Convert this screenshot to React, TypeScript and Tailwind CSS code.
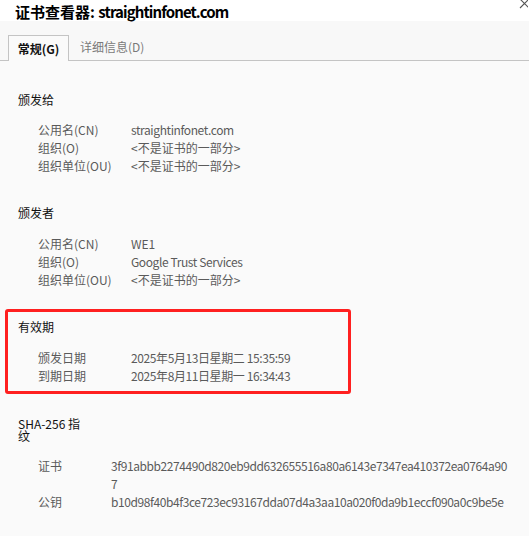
const font = "font-['Noto_Sans_CJK_SC','Noto_Sans',sans-serif]"

const Row = ({ label, value, labelW = 'w-[93px]' }: { label: string, value: React.ReactNode, labelW?: string }) => (
  <div className="flex pl-[38px] h-[18px] leading-[18px]">
    <div className={`${labelW} shrink-0`}>{label}</div>
    <div>{value}</div>
  </div>
)

const Header = ({ children }: { children: React.ReactNode }) => (
  <div className="pl-[18px] h-[18px] leading-[18px] text-[#111]">{children}</div>
)

const Latin = ({ children }: { children: React.ReactNode }) => (
  <span className="tracking-[-0.4px]">{children}</span>
)

export default function App() {
  return (
    <div className={`${font} w-[529px] h-[536px] bg-[#fafafa] text-[12px] overflow-hidden`}>
      <div className="relative h-[21px] bg-white">
        <div className="pl-[15px] pt-[2px] text-[15px] leading-[20px] font-bold text-black">
          证书查看器: <span className="tracking-[-0.9px]">straightinfonet.com</span>
        </div>
        <svg className="absolute right-[1px] top-[0px]" width="9" height="9" viewBox="0 0 9 9">
          <path d="M1 -1 L10 8 M10 -1 L1 8" stroke="#555" strokeWidth="1.1" />
        </svg>
      </div>

      <div className="flex items-end h-[40px] border-b border-[#c4c4c4] bg-[#f8f8f8] pl-[8px]">
        <div className="h-[26px] w-[61px] -mb-px border border-b-0 border-[#c4c4c4] bg-[#fafafa] flex items-center justify-center font-bold text-[#111]">
          常规(G)
        </div>
        <div className="h-[26px] px-[11px] flex items-center text-[#7a7a7a]">
          详细信息(D)
        </div>
      </div>

      <div className="text-[#5a5a5a]">
        <div className="pt-[30px]">
          <Header>颁发给</Header>
          <div className="mt-[12px]">
            <Row label="公用名(CN)" value={<Latin>straightinfonet.com</Latin>} />
            <Row label="组织(O)" value="<不是证书的一部分>" />
            <Row label="组织单位(OU)" value="<不是证书的一部分>" />
          </div>
        </div>

        <div className="pt-[29px]">
          <Header>颁发者</Header>
          <div className="mt-[13px]">
            <Row label="公用名(CN)" value="WE1" />
            <Row label="组织(O)" value={<Latin>Google Trust Services</Latin>} />
            <Row label="组织单位(OU)" value="<不是证书的一部分>" />
          </div>
        </div>

        <div className="mt-[20px] ml-[5px] w-[346px] h-[85px] border-[3px] border-[#ff2020] rounded-[3px] relative">
          <div className="absolute left-[10px] top-[6px] w-[330px]">
            <div className="h-[18px] leading-[18px] text-[#111]">有效期</div>
            <div className="mt-[13px]">
              <div className="flex pl-[20px] h-[18px] leading-[18px]">
                <div className="w-[93px] shrink-0">颁发日期</div>
                <div><Latin>2025年5月13日星期二 15:35:59</Latin></div>
              </div>
              <div className="flex pl-[20px] h-[18px] leading-[18px]">
                <div className="w-[93px] shrink-0">到期日期</div>
                <div><Latin>2025年8月11日星期一 16:34:43</Latin></div>
              </div>
            </div>
          </div>
        </div>

        <div className="pt-[24px]">
          <div className="pl-[18px] w-[90px] leading-[12px] text-[#111]">SHA-256 指纹</div>
          <div className="mt-[15px]">
            <div className="flex pl-[38px] leading-[18px]">
              <div className="w-[73px] shrink-0">证书</div>
              <div className="tracking-[-0.42px]">
                3f91abbb2274490d820eb9dd632655516a80a6143e7347ea410372ea0764a90
                <br />7
              </div>
            </div>
            <Row
              labelW="w-[73px]"
              label="公钥"
              value={<span className="tracking-[-0.42px]">b10d98f40b4f3ce723ec93167dda07d4a3aa10a020f0da9b1eccf090a0c9be5e</span>}
            />
          </div>
        </div>
      </div>
    </div>
  )
}
